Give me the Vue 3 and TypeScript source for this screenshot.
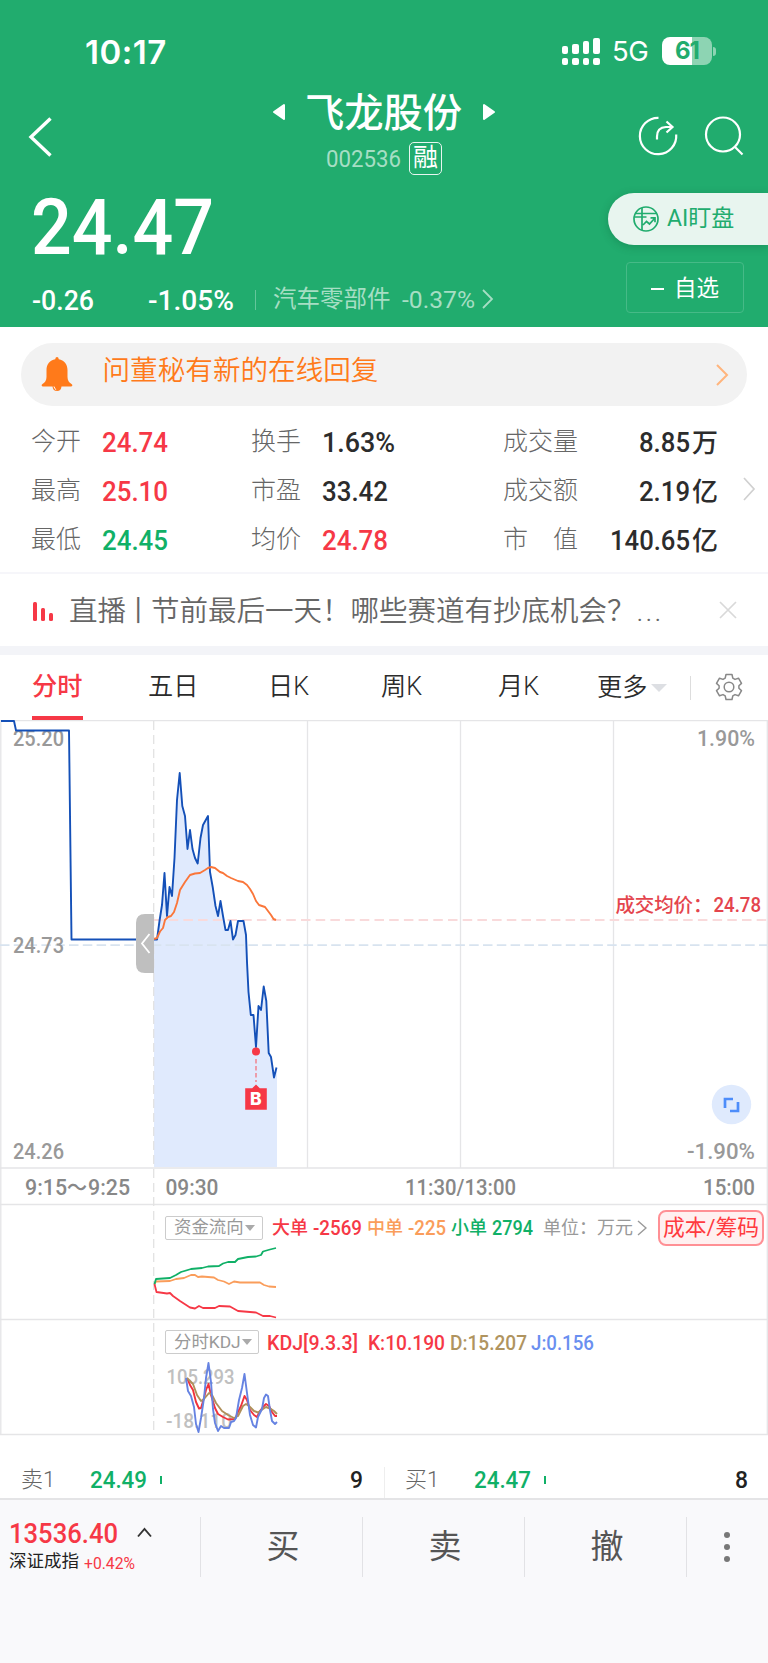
<script setup lang="ts">
import { h } from 'vue'

interface FitProps { text: string; width: number; size: number }

// Condensed numerals: real text squeezed to a fixed advance width.
const FitText = (p: FitProps) =>
  h('svg', { class: 'fit', width: p.width, height: p.size, style: { display: 'block', overflow: 'visible', flex: 'none' } }, [
    h('text', {
      x: 0, y: p.size * 0.855, 'font-size': p.size, fill: 'currentColor',
      textLength: p.width, lengthAdjust: 'spacingAndGlyphs',
    }, p.text),
  ])
FitText.props = ['text', 'width', 'size']

interface Stat { label: string; value: string; width: number; tone: string; unit?: string }
const stats: Stat[][] = [
  [
    { label: '今开', value: '24.74', width: 66, tone: 'up' },
    { label: '换手', value: '1.63%', width: 73, tone: 'ink' },
    { label: '成交量', value: '8.85', width: 51, tone: 'ink', unit: '万' },
  ],
  [
    { label: '最高', value: '25.10', width: 66, tone: 'up' },
    { label: '市盈', value: '33.42', width: 66, tone: 'ink' },
    { label: '成交额', value: '2.19', width: 51, tone: 'ink', unit: '亿' },
  ],
  [
    { label: '最低', value: '24.45', width: 66, tone: 'down' },
    { label: '均价', value: '24.78', width: 66, tone: 'up' },
    { label: '市　值', value: '140.65', width: 80, tone: 'ink', unit: '亿' },
  ],
]

const signal = [8, 10, 13, 16]

interface AxisLabel { t: string; x: number; y: number; w: number; c: string }
const axis: AxisLabel[] = [
  { t: '25.20', x: 13, y: 746, w: 51, c: '#999' },
  { t: '24.73', x: 13, y: 952.5, w: 51, c: '#999' },
  { t: '24.26', x: 13, y: 1159, w: 51, c: '#999' },
  { t: '1.90%', x: 697, y: 746, w: 58, c: '#999' },
  { t: '-1.90%', x: 687, y: 1159, w: 68, c: '#999' },
  { t: '9:15', x: 25, y: 1195, w: 42, c: '#888' },
  { t: '9:25', x: 88, y: 1195, w: 42, c: '#888' },
  { t: '09:30', x: 165.5, y: 1195, w: 53, c: '#888' },
  { t: '11:30/13:00', x: 405, y: 1195, w: 111, c: '#888' },
  { t: '15:00', x: 703, y: 1195, w: 52, c: '#888' },
]

const price =
  '1,721 14,721 16,730.5 69,730.5 71.5,939.5 157,939.5 159.5,921 162,905 164.5,873 167,916 169.5,887 172,896 174.5,858 177,800 179.7,773 182.3,806 185,816 187.5,849 190,830 192.5,849 195,858 197.7,863.5 200.5,838 203,825 208,816 210,872 212.7,887 215.5,906 218,916 220.5,901 223,916 225.5,930 228,930 230.5,921 233,939.5 235.5,935 238,921 243.5,921 246,935 247,962 248.5,992 250.8,1015 253.5,1015 256,1047 258.5,1006 261,1010 263.7,986.5 266.3,1001 268.7,1053 271,1057 274,1077.5 276.5,1067.5'
const area = '154,1167 154,939.5 ' + price.slice(price.indexOf('157,')) + ' 277,1067 277,1167'
const average =
  '154,939 157,938 160,931.5 163,928 165,920 168,917 171,916 174,912 177,903 180,890 185,882 190,875 195,873.5 200,873 205,870 208,868 211,867 215,868 220,872 223,873 227,876 231,878 238,881 243,882 247,885 250,889 253,894 256,901 259,905 265,907 268,911 271,915 273.5,919 276,920'
const flows = [
  { c: '#fa9d5b', p: '154.5,1284 156,1281.5 170,1281 176,1279 184,1278 191,1275 195,1275 198,1277 202,1276.5 214,1277.5 218,1280 224,1281.5 229,1284 234,1281.5 240,1282.5 260,1282.5 264,1285 269,1286.5 276,1287' },
  { c: '#f63846', p: '154.5,1284 156.5,1292 167,1293.5 170,1293 173,1296 180,1301 190,1307.5 195,1308.5 199,1306 203,1308 215,1308 219,1306 230,1306.5 238,1311 256,1312.5 263,1316 270,1316 276,1317.5' },
  { c: '#10b067', p: '154.5,1284 156,1279 170,1278 176,1275 181,1272 191,1269 202,1268 208,1266.5 219,1266 223,1263.5 228,1262 235,1262 238,1259 248,1257 256,1256.5 261,1255 263,1251.5 270,1249.5 276,1248' },
]
const kdj = [
  { c: '#f0323c', p: '187,1378 190,1385 193,1390 196,1402 199,1408.5 201,1408 204,1398 206,1390 208.5,1384 211,1395 215,1408 218,1414 223,1417 228,1419.5 235,1419 238,1412 241,1406 244.5,1396 247,1400 250,1410 254,1415 257,1417 260,1411 263,1407 266,1404 269,1406 272,1412 275,1416 277,1416' },
  { c: '#b0905a', p: '187,1378 193,1384 197,1395 201,1401 204,1399 209,1393 212,1395 216,1403 222,1411 228,1415 234,1418 238,1416 243,1406 246,1404 249,1406 254,1411 258,1412.5 263,1409 266,1407 271,1409 274,1411 277,1414' },
  { c: '#6683e2', p: '186,1378 188,1391 191,1396 194,1407 196,1424 198.5,1432 201,1418 204,1398 206,1378 208.5,1363 211,1382 213,1409 215,1423 218,1431 221,1426 224,1428 229,1428 231,1422 234,1421 236,1418 239,1400 242,1388 244.5,1374 247,1393 250,1415 253,1425 256,1427.5 258,1417 262,1409 264,1398 266,1394.5 268,1396 270,1410 272,1421 275,1424 277,1422' },
]
const trades = ['买', '卖', '撤']
const depth = [
  { side: '卖1', price: '24.49', qty: '9' },
  { side: '买1', price: '24.47', qty: '8' },
]
</script>

<template>
  <main class="page">
    <header class="header">
      <div class="status">
        <div class="clock">10:17</div>
        <div class="status-right">
          <div class="signal">
            <div v-for="(b, i) in signal" :key="i" class="sig">
              <span class="bar" :style="{ height: b + 'px' }"></span><span class="dot"></span>
            </div>
          </div>
          <span class="net">5G</span>
          <div class="battery"><span>61</span></div>
          <i class="nub"></i>
        </div>
      </div>

      <div class="titlebar">
        <svg class="back" width="26" height="44" viewBox="0 0 26 44"><path d="M23.500 3.500 4 22l19.500 18.500" fill="none" stroke="#fff" stroke-width="3.400" /></svg>
        <div class="title">
          <div class="name-row">
            <svg width="14" height="18" viewBox="0 0 14 18"><path d="M12 2v14L2 9z" fill="#fff" stroke="#fff" stroke-width="2" stroke-linejoin="round" /></svg>
            <h1>飞龙股份</h1>
            <svg width="14" height="18" viewBox="0 0 14 18"><path d="M2 2v14l10-7z" fill="#fff" stroke="#fff" stroke-width="2" stroke-linejoin="round" /></svg>
          </div>
          <div class="code-row">
            <FitText class="code" text="002536" :width="75" :size="24" />
            <span class="margin-tag">融</span>
          </div>
        </div>
        <div class="actions">
          <svg width="40" height="40" viewBox="0 0 40 40" fill="none" stroke="#fff" stroke-width="2.200">
            <path d="M20.500 1.800A18.200 18.200 0 1 0 38.200 18.500" />
            <path d="M19 23.500v-3q0-9 9-9.500h6.500M28.500 5.500l6 5.500-6 5.500" />
          </svg>
          <svg width="40" height="40" viewBox="0 0 40 40" fill="none" stroke="#fff" stroke-width="2.200">
            <circle cx="19" cy="18.500" r="17" /><path d="m30.500 30.500 8 8" />
          </svg>
        </div>
      </div>

      <div class="quote">
        <div class="quote-left">
          <FitText class="price" text="24.47" :width="183" :size="77" />
          <div class="change">
            <FitText class="chg" text="-0.26" :width="62" :size="27.500" />
            <FitText class="pct" text="-1.05%" :width="86" :size="27.500" />
            <i class="vline"></i>
            <span class="sector">汽车零部件</span>
            <FitText class="spct" text="-0.37%" :width="73" :size="24.500" />
            <svg class="schev" width="13" height="20" viewBox="0 0 13 20"><path d="m2 1 9 9-9 9" fill="none" stroke="#a6dec4" stroke-width="1.800" /></svg>
          </div>
        </div>
        <div class="quote-right">
          <button class="ai">
            <svg width="28" height="28" viewBox="0 0 28 28" fill="none" stroke="#21ac6e" stroke-width="1.700">
              <circle cx="14" cy="14" r="12" /><path d="M10 3v22M3 8.500h22M2.500 12h12M11 20l3.500-3.500 3 2.500 5-5.500M18.500 12.800h4.500v4.500" />
            </svg>
            <span>AI盯盘</span>
          </button>
          <button class="watch"><i></i><span>自选</span></button>
        </div>
      </div>
    </header>

    <section class="notice">
      <svg class="bell" width="32" height="36" viewBox="0 0 32 36">
        <path d="M16 1q1.500 0 1.800 2.200C23 4 26.500 8 26.500 14v7c0 3.500 1.500 5.500 4 7 1.500 1 .8 2.500-.5 2.500H2c-1.300 0-2-1.500-.5-2.500 2.500-1.500 4-3.500 4-7v-7c0-6 3.500-10 8.700-10.800Q14.500 1 16 1zM11.500 30.500h9q-.5 4.500-4.500 4.500t-4.500-4.500z" fill="#ff7a1a" />
        <path d="M13 30.500q.5 2.500 2.200 3.200" stroke="#fff" fill="none" />
      </svg>
      <span>问董秘有新的在线回复</span>
      <svg class="nchev" width="14" height="24" viewBox="0 0 14 24"><path d="m2 2 10 10L2 22" fill="none" stroke="#ffb57d" stroke-width="2" /></svg>
    </section>

    <section class="stats">
      <div v-for="(row, i) in stats" :key="i" class="stat-row">
        <div v-for="s in row" :key="s.label" class="stat">
          <span class="label">{{ s.label }}</span>
          <div class="value" :class="s.tone">
            <FitText :text="s.value" :width="s.width" :size="28" /><span v-if="s.unit" class="unit">{{ s.unit }}</span>
          </div>
        </div>
      </div>
      <svg class="stat-chev" width="14" height="24" viewBox="0 0 14 24"><path d="m2 1 10 11L2 23" fill="none" stroke="#d0d0d0" stroke-width="1.700" /></svg>
    </section>

    <section class="live">
      <div class="live-icon"><i></i><i></i><i></i></div>
      <p>直播<span class="stick">丨</span>节前最后一天！哪些赛道有抄底机会？<span class="dots">...</span></p>
      <svg width="18" height="18" viewBox="0 0 18 18"><path d="m1 1 16 16M17 1 1 17" stroke="#d9d9d9" stroke-width="1.700" /></svg>
    </section>

    <nav class="tabs">
      <span class="tab active">分时</span>
      <span class="tab">五日</span>
      <span class="tab">日K</span>
      <span class="tab">周K</span>
      <span class="tab">月K</span>
      <span class="tab more">更多<i></i></span>
      <span class="tab-sep"></span>
      <svg class="gear" width="28" height="28" viewBox="0 0 28 28" fill="none" stroke="#888" stroke-width="1.500" stroke-linejoin="round">
        <path d="M11 1.500h6l.8 3.600 2.200 1.300 3.500-1.200 3 5.200-2.600 2.300v2.600l2.600 2.300-3 5.200-3.500-1.200-2.200 1.300-.8 3.600h-6l-.8-3.600L8 21.600l-3.500 1.200-3-5.200 2.600-2.300v-2.600l-2.600-2.300 3-5.200L8 6.400l2.200-1.300z" />
        <circle cx="14" cy="14" r="4.800" />
      </svg>
    </nav>

    <section class="chart">
      <svg class="plot" width="768" height="716" viewBox="0 720 768 716">
        <g stroke="#e5e5e7" stroke-width="1.300" fill="none">
          <path d="M0 720.500H768M0 1168H768M0 1204.500H768M0 1319.500H768M0 1434.500H768M.8 720V1435M767.300 720V1435" />
          <path d="M307.500 720V1168M460.500 720V1168M613.500 720V1168" />
        </g>
        <polygon :points="area" fill="#e0eafd" />
        <path d="M153.700 721V1434" stroke="#e2e2e2" stroke-width="1.300" stroke-dasharray="9 5" />
        <path d="M154 920H767" stroke="#f9dadb" stroke-width="1.800" stroke-dasharray="9.500 5.200" />
        <path d="M0 945.200H767" stroke="#d8e3ef" stroke-width="1.800" stroke-dasharray="9.500 4.300" />
        <g font-size="22" class="din">
          <text v-for="a in axis" :key="a.t" :x="a.x" :y="a.y" :fill="a.c" :textLength="a.w" lengthAdjust="spacingAndGlyphs">{{ a.t }}</text>
          <text x="67" y="1195" fill="#888" textLength="20" lengthAdjust="spacingAndGlyphs">～</text>
        </g>
        <polyline :points="price" fill="none" stroke="#1450b8" stroke-width="1.900" stroke-linejoin="round" />
        <polyline :points="average" fill="none" stroke="#fa763a" stroke-width="1.900" stroke-linejoin="round" />
        <path d="M154 914h-9q-9 0-9 9v41q0 9 9 9h9z" fill="#bfbfbf" />
        <path d="m149.500 934-7.500 9.500 7.500 9.500" fill="none" stroke="#fff" stroke-width="1.800" />
        <path d="M256 1059v23" stroke="#f0848f" stroke-width="1.500" stroke-dasharray="4.500 2.500" />
        <circle cx="256" cy="1051.500" r="4" fill="#f63846" />
        <path d="M245.200 1088.300h7l3.800-3.800 3.800 3.800h7v21.500h-21.600z" fill="#f63846" />
        <text x="250" y="1105.200" font-size="17.500" font-weight="800" fill="#fff" class="inter">B</text>
        <g class="avg" fill="#e4454d">
          <text x="615.500" y="912" font-size="19.500" textLength="97">成交均价：</text>
          <text x="713.500" y="912" font-size="20.500" textLength="47.500" lengthAdjust="spacingAndGlyphs">24.78</text>
        </g>
        <circle cx="731.500" cy="1104.500" r="19.700" fill="#dfeafd" />
        <path d="M733 1099h-8v9M730 1111h8v-9" fill="none" stroke="#4d8dfa" stroke-width="2.700" />
        <polyline v-for="f in flows" :key="f.c" :points="f.p" fill="none" :stroke="f.c" stroke-width="1.800" stroke-linejoin="round" />
        <g font-size="21" fill="#c0c0c0" class="din">
          <text x="166.500" y="1384" textLength="68" lengthAdjust="spacingAndGlyphs">105.293</text>
          <text x="166" y="1427.500" textLength="66" lengthAdjust="spacingAndGlyphs">-18.110</text>
        </g>
        <polyline v-for="k in kdj" :key="k.c" :points="k.p" fill="none" :stroke="k.c" stroke-width="1.900" stroke-linejoin="round" />
      </svg>

      <div class="legend flow">
        <span class="chip">资金流向<i></i></span>
        <span class="c-red item">大单<FitText text="-2569" :width="49" :size="20.500" /></span>
        <span class="c-orange item">中单<FitText text="-225" :width="38" :size="20.500" /></span>
        <span class="c-green item">小单<FitText text="2794" :width="41" :size="20.500" /></span>
        <span class="c-gray">单位：万元</span>
        <svg class="uchev" width="10" height="16" viewBox="0 0 10 16"><path d="m1 1 8 7-8 7" fill="none" stroke="#999" stroke-width="1.400" /></svg>
        <button class="cost">成本/筹码</button>
      </div>
      <div class="legend kdj">
        <span class="chip k">分时KDJ<i></i></span>
        <FitText class="c-red k1" text="KDJ[9.3.3]" :width="91" :size="20.500" />
        <FitText class="c-red k2" text="K:10.190" :width="77" :size="20.500" />
        <FitText class="c-gold k3" text="D:15.207" :width="77" :size="20.500" />
        <FitText class="c-blue k3" text="J:0.156" :width="63" :size="20.500" />
      </div>
    </section>

    <section class="depth">
      <div v-for="d in depth" :key="d.side" class="order">
        <span class="side">{{ d.side }}</span>
        <FitText class="oprice" :text="d.price" :width="57" :size="24.500" />
        <i></i>
        <FitText class="qty" :text="d.qty" :width="13" :size="24.500" />
      </div>
    </section>

    <footer class="footer">
      <div class="index">
        <div class="index-top">
          <FitText text="13536.40" :width="109" :size="28" />
          <svg width="15" height="11" viewBox="0 0 15 11"><path d="m1 9.500 6.500-7.500 6.500 7.500" fill="none" stroke="#333" stroke-width="1.900" /></svg>
        </div>
        <div class="index-bottom"><span>深证成指</span><FitText text="+0.42%" :width="51" :size="17" /></div>
      </div>
      <button v-for="t in trades" :key="t" class="trade">{{ t }}</button>
      <div class="menu"><i></i><i></i><i></i></div>
    </footer>
  </main>
</template>

<style>
body { background: #f9f9fb; }
</style>

<style scoped>
* { box-sizing: border-box; }
.page { width: 768px; height: 1663px; overflow: hidden; background: #fff; font-family: Roboto, 'Noto Sans CJK SC', sans-serif; line-height: 1; color: #333; }
button { font: inherit; border: 0; margin: 0; padding: 0; background: none; }
svg { display: block; flex: none; }
span { white-space: nowrap; }
.header { height: 327px; background: #21ac6e; color: #fff; }
.status { height: 102px; display: flex; justify-content: space-between; padding: 0 52px 0 85px; align-items: center; }
.clock { font: 600 33px/1 Inter, sans-serif; letter-spacing: 0.500px; margin-top: 2px; }
.status-right { display: flex; align-items: center; }
.signal { display: flex; gap: 4px; align-items: flex-end; }
.sig { display: flex; flex-direction: column; gap: 4px; width: 6.600px; }
.bar, .dot { background: #fff; border-radius: 2px; }
.dot { height: 7px; }
.net { font: 400 27.500px/1 Inter, sans-serif; margin: 2px 0 0 12px; width: 36px; letter-spacing: -0.500px; }
.battery { margin-left: 14px; width: 50px; height: 28px; border-radius: 8px; background: linear-gradient(90deg, #fff 61%, #8dd4b3 61%); color: #21ac6e; font: 700 24px/28px Inter, sans-serif; text-align: center; letter-spacing: -1px; }
.nub { width: 3px; height: 9px; margin-left: 1px; background: #8dd4b3; border-radius: 0 4px 4px 0; }
.titlebar { height: 86px; display: flex; align-items: flex-start; padding: 0 24px 0 27px; }
.back { margin-top: 13px; }
.title { margin-left: 219px; width: 224px; margin-top: -10px; }
.name-row { display: flex; align-items: center; justify-content: space-between; height: 40px; margin: 0; }
h1 { margin: 6px 0 0 -1px; font-size: 39.300px; font-weight: 500; letter-spacing: 0; }
.code-row { display: flex; align-items: center; margin-top: 9px; padding-left: 54px; gap: 8px; height: 34px; }
.code { color: #a6dec4; }
.margin-tag { width: 33px; height: 33px; border: 1.500px solid #e8f6f0; border-radius: 5px; font-size: 25px; text-align: center; line-height: 30px; }
.actions { margin-left: auto; display: flex; gap: 26px; padding-top: 14px; }
.quote { display: flex; justify-content: space-between; height: 139px; }
.quote-left { padding: 0 0 0 32px; }
.price { font-weight: 500; margin: 0 0 0 -1px; }
.change { display: flex; align-items: center; margin-top: 21px; height: 28px; }
.pct { margin-left: 54px; }
.chg, .pct { font-weight: 500; }
.vline { width: 1px; height: 20px; margin: 0 17px 0 21px; background: #64c69b; }
.sector { font-size: 23.500px; color: #a6dec4; margin-top: -1px; }
.spct { color: #a6dec4; margin: -1px 0 0 11px; }
.schev { margin-left: 6px; margin-top: -3px; }
.quote-right { display: flex; flex-direction: column; align-items: flex-end; }
.ai { margin-top: 5px; width: 160px; height: 52px; border-radius: 26px 0 0 26px; background: #e8f5ef; box-shadow: 0 2px 8px rgba(0, 70, 40, 0.250); display: flex; align-items: center; gap: 7px; padding: 0 0 1px 24px; color: #21ac6e; font-size: 23px; }
.watch { width: 118px; height: 51px; margin: 17px 24px 0 0; border: 1.500px solid #46ba87; border-radius: 4px; color: #fff; display: flex; align-items: center; padding-left: 24px; font-size: 22.500px; gap: 10px; }
.watch i { width: 13px; height: 2px; background: #fff; margin-top: 3px; }
.watch span { margin-top: 1px; }
.notice { height: 63px; margin: 16px 21px 0; border-radius: 32px; background: #f2f2f2; display: flex; align-items: center; padding: 0 18px 0 20px; color: #ff7a1a; font-size: 27.600px; font-weight: 350; }
.notice span { margin: -7px 0 0 29.500px; }
.bell { margin-top: -2px; }
.nchev { margin-left: auto; }
.stats { height: 168px; padding: 11px 0 0 31px; position: relative; border-bottom: 2px solid #f6f6fa; }
.stat-row { height: 49px; display: grid; grid-template-columns: 220px 252px 215px; align-items: center; }
.stat { display: flex; align-items: center; }
.stat:last-child { justify-content: space-between; }
.label { font-size: 25px; font-weight: 300; color: #666; width: 71px; margin-top: -1px; }
.stat:last-child .label { width: auto; }
.value { display: flex; align-items: center; font-weight: 500; padding-top: 1px; }
.unit { font-size: 26px; margin: 1px 0 0 1.500px; }
.up { color: #f63846; }
.down { color: #10b067; }
.ink { color: #2c2c2c; }
.stat-chev { position: absolute; right: 12px; top: 71px; }
.live { height: 81px; display: flex; align-items: center; padding: 0 31px 0 33px; border-bottom: 9px solid #f3f4f8; }
.live-icon { display: flex; gap: 4px; align-items: flex-end; height: 19px; width: 36px; margin-top: 2px; }
.live-icon i { width: 4px; height: 19px; border-radius: 1.500px; background: #f63846; }
.live-icon i:nth-child(2) { height: 13px; }
.live-icon i:nth-child(3) { height: 8px; }
.live p { margin: 5px 0 0; font-size: 28.500px; color: #666; font-weight: 350; }
.stick { margin: 0 -1.500px 0 -2px; }
.dots { letter-spacing: 2.200px; margin-left: 1px; }
.live svg { margin-left: auto; }
.tabs { height: 65px; display: flex; align-items: center; padding-left: 32px; position: relative; font-size: 25.200px; font-weight: 350; color: #2b2b2b; }
.tab { height: 65px; line-height: 64px; width: 116px; }
.tab:nth-child(2) { width: 120px; }
.tab:nth-child(3) { width: 113px; }
.tab:nth-child(4) { width: 117px; }
.tab:nth-child(5) { width: 99px; }
.active { width: 51px; margin-right: 65px; color: #f63846; font-weight: 500; border-bottom: 4px solid #f63846; }
.more { width: 93px; display: flex; align-items: center; gap: 4px; }
.more i { border: 8px solid transparent; border-top-color: #dddfe3; border-bottom: 0; }
.tab-sep { width: 1px; height: 24px; background: #ddd; }
.gear { margin-left: 24px; margin-top: -1px; }
.chart { position: relative; height: 716px; }
.din { font-weight: 500; }
.avg { font-weight: 500; }
.inter { font-family: Inter, sans-serif; }
.legend { position: absolute; left: 165px; display: flex; align-items: center; height: 36px; font-size: 18px; font-weight: 500; }
.flow { top: 489.500px; right: 4px; }
.legend.kdj { top: 604px; }
.chip { width: 98px; height: 24px; border: 1.500px solid #ccc; border-radius: 2px; color: #999; font-size: 17.400px; font-weight: 400; line-height: 19px; padding-left: 8px; display: flex; align-items: center; gap: 1px; }
.chip.k { width: 94px; }
.chip i { border: 5px solid transparent; border-top: 6px solid #aaa; border-bottom: 0; }
.item { display: flex; align-items: center; gap: 5px; }
.flow .c-red { margin-left: 9px; }
.flow .c-orange, .flow .c-green { margin-left: 5px; }
.c-red { color: #f63846; }
.c-orange { color: #fa9d5b; }
.c-green { color: #10b067; }
.c-gray { color: #999; font-weight: 400; margin-left: 10px; }
.c-gold { color: #b0945f; }
.c-blue { color: #6a8ff0; }
.k1 { margin-left: 8px; }
.k2 { margin-left: 10px; }
.k3 { margin-left: 4.500px; }
.uchev { margin-left: 4px; }
.cost { margin-left: auto; width: 106px; height: 36px; border: 2px solid #ff9095; border-radius: 8px; background: #fff0f0; color: #ff3b3f; font-size: 21.800px; font-weight: 400; line-height: 30px; text-align: center; white-space: nowrap; }
.depth { height: 62px; display: flex; padding-top: 31px; }
.order { width: 385px; height: 31px; display: flex; align-items: center; padding: 0 21px 6px 21px; border-right: 1px solid #eee; }
.order + .order { width: 383px; padding-left: 20px; padding-right: 20px; border: 0; }
.side { font-size: 22px; font-weight: 300; color: #666; width: 69px; margin-top: 0; }
.order i { width: 2px; height: 8px; background: #10b067; margin-left: 13px; margin-top: 0; }
.oprice { color: #10b067; font-weight: 500; }
.qty { margin-left: auto; font-weight: 500; color: #222; }
.footer { height: 165px; border-top: 2px solid #e4e4e6; background: #f9f9fb; display: flex; padding-top: 17px; align-items: flex-start; }
.index { width: 201px; height: 60px; border-right: 1px solid #e2e2e5; padding: 2px 0 0 9px; color: #f63846; }
.index-top { display: flex; align-items: center; gap: 19px; font-weight: 500; }
.index-top svg:last-child { margin-top: -1px; }
.index-bottom { display: flex; align-items: center; gap: 5px; margin-top: 7px; font-size: 17.500px; }
.index-bottom span { color: #222; margin-top: -1px; }
.trade { width: 162px; height: 60px; padding-left: 3px; border-right: 1px solid #e2e2e5; font-size: 33px; color: #555; line-height: 58px; }
.menu { width: 79px; height: 60px; display: flex; flex-direction: column; align-items: center; justify-content: center; gap: 6px; }
.menu i { width: 6px; height: 6px; border-radius: 50%; background: #777; }
</style>
